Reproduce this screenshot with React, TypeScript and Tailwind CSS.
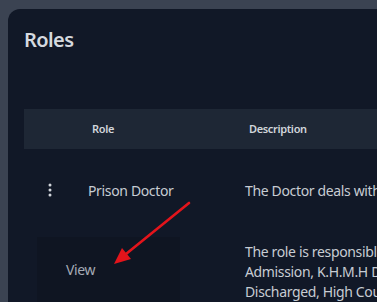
import React from "react";

export default function App() {
  return (
    <div
      className="w-[377px] h-[302px] overflow-hidden bg-[#3b4352] pt-[9px] pl-[8px]"
      style={{ fontFamily: '"Noto Sans", "Open Sans", sans-serif' }}
    >
      <div className="relative h-full bg-[#111827] rounded-tl-[12px] pl-4 pt-[17px]">
        <h1 className="text-[20px] leading-[28px] font-semibold tracking-[-0.6px] text-[#d5d9df]">Roles</h1>
        <div className="mt-[55px] w-[420px]">
          <div className="flex h-10 items-center bg-[#1e2735] text-[11px] font-semibold tracking-[-0.35px] text-[#d1d5db]">
            <div className="w-[68px] shrink-0" />
            <div className="w-[157px] shrink-0">Role</div>
            <div className="shrink-0">Description</div>
          </div>
          <div className="flex h-[82px] items-center text-[14px] tracking-[-0.35px] text-[#c7ccd3]">
            <div className="w-[64px] shrink-0 flex justify-center pr-[12px]">
              <svg width="4" height="14" viewBox="0 0 4 14" fill="#d1d5db">
                <circle cx="2" cy="2" r="1.5" />
                <circle cx="2" cy="7" r="1.5" />
                <circle cx="2" cy="12" r="1.5" />
              </svg>
            </div>
            <div className="w-[157px] shrink-0">Prison Doctor</div>
            <div className="shrink-0 whitespace-nowrap">The Doctor deals with</div>
          </div>
          <div className="flex pt-[11px] text-[14px] leading-[20px] tracking-[-0.35px] text-[#c7ccd3]">
            <div className="w-[221px] shrink-0" />
            <div className="shrink-0">
              <div className="whitespace-nowrap">The role is responsible</div>
              <div className="whitespace-nowrap">Admission, K.H.M.H D</div>
              <div className="whitespace-nowrap">Discharged, High Cou</div>
            </div>
          </div>
        </div>
        <div className="absolute left-[29px] top-[228px] w-[143px] h-[80px] bg-[#0f1522] pl-[29px] pt-[22px] text-[14px] tracking-[-0.35px] text-[#a5abb5]">
          View
        </div>
        <svg
          className="absolute left-[0px] top-[0px] pointer-events-none"
          width="369"
          height="293"
          viewBox="0 0 369 293"
        >
          <line x1="181" y1="194" x2="118" y2="245" stroke="#e3141b" strokeWidth="2.6" strokeLinecap="round" />
          <polygon points="106,255 114,239 123,250" fill="#e3141b" />
        </svg>
      </div>
    </div>
  );
}
